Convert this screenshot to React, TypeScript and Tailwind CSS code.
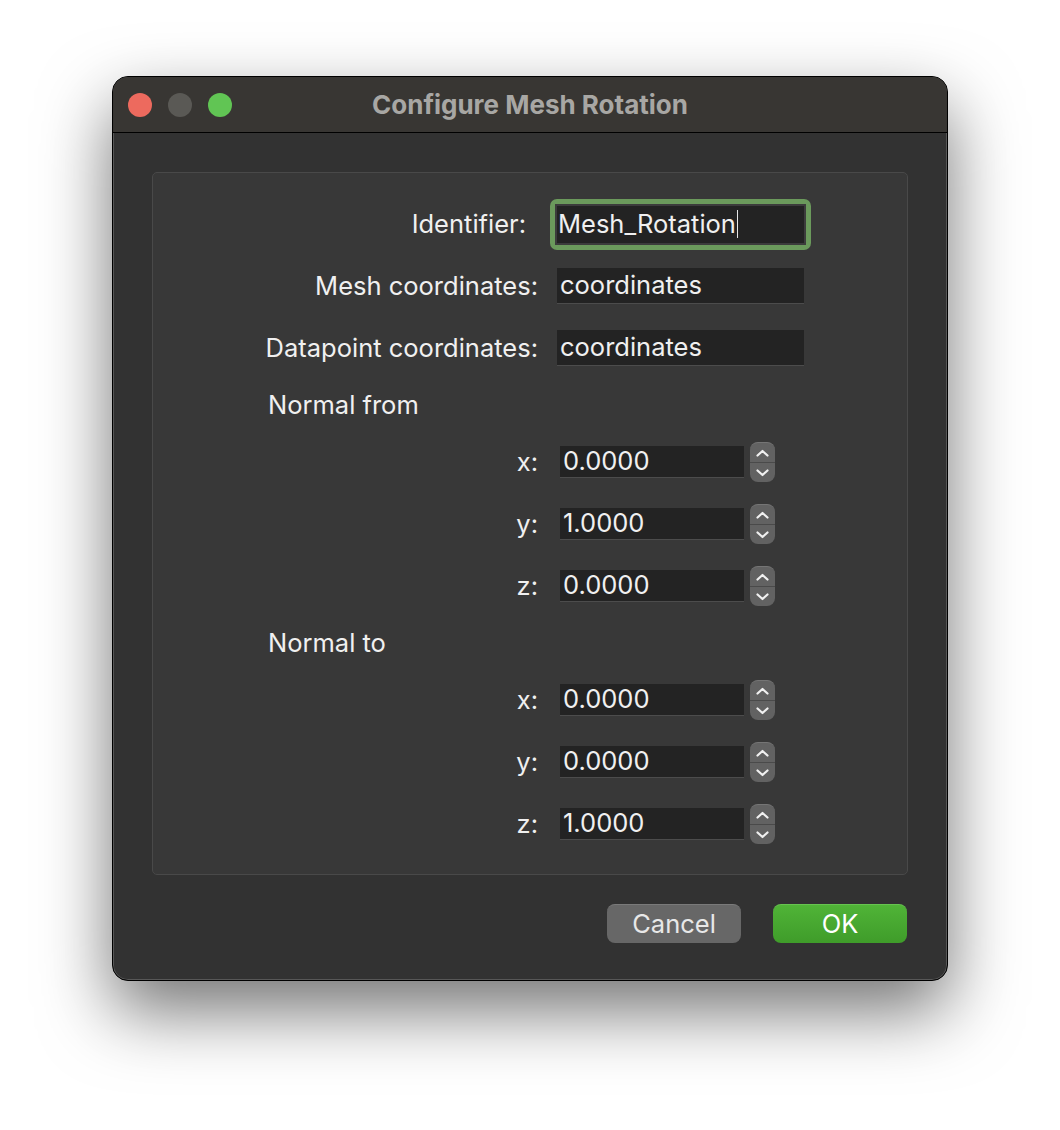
import React from 'react'

const font = { fontFamily: 'Inter, "Noto Sans", sans-serif' }

function TrafficLights() {
  return (
    <div className="flex items-center gap-[16px] pl-[15px]">
      <span className="w-[24px] h-[24px] rounded-full bg-[#ed6a5e]" />
      <span className="w-[24px] h-[24px] rounded-full bg-[#5a5955]" />
      <span className="w-[24px] h-[24px] rounded-full bg-[#61c554]" />
    </div>
  )
}

function Spinner() {
  return (
    <div className="w-[25px] h-[40px] rounded-[8px] bg-[#626262] border-t border-[#757575] flex flex-col overflow-hidden">
      <div className="flex-1 flex items-center justify-center">
        <svg width="13" height="8" viewBox="0 0 13 8">
          <polyline points="1.5,6.5 6.5,2 11.5,6.5" fill="none" stroke="#f0f0f0" strokeWidth="2.2" strokeLinecap="round" strokeLinejoin="round" />
        </svg>
      </div>
      <div className="h-px bg-[#4a4a4a]" />
      <div className="flex-1 flex items-center justify-center">
        <svg width="13" height="8" viewBox="0 0 13 8">
          <polyline points="1.5,1.5 6.5,6 11.5,1.5" fill="none" stroke="#f0f0f0" strokeWidth="2.2" strokeLinecap="round" strokeLinejoin="round" />
        </svg>
      </div>
    </div>
  )
}

function TextRow({ label, value, focused, labelPad }: { label: string; value: string; focused?: boolean; labelPad?: string }) {
  return (
    <div className="h-[62px] flex items-center">
      <div className={`w-[385px] text-right ${labelPad ?? ''}`}>{label}</div>
      {focused ? (
        <div className="ml-[12px] p-[5px] rounded-[7px] bg-[#6b9a5c]">
          <div className="w-[251px] h-[41px] bg-[#232323] border-2 border-[#3c3c3c] flex items-center pl-[1px]">
            <span>{value}</span>
            <span className="w-[1.5px] h-[28px] bg-[#e6e6e6] ml-[1px]" />
          </div>
        </div>
      ) : (
        <div className="ml-[19px] w-[247px] h-[36px] bg-[#232323] border-b border-[#4c4c4c] flex items-center pl-[3px]">
          {value}
        </div>
      )}
    </div>
  )
}

function SpinRow({ axis, value }: { axis: string; value: string }) {
  return (
    <div className="h-[62px] flex items-center">
      <div className="w-[385px] text-right">{axis}:</div>
      <div className="ml-[22px] w-[184px] h-[32px] bg-[#232323] border-b border-[#4c4c4c] flex items-center pl-[3px]">
        {value}
      </div>
      <div className="ml-[6px]">
        <Spinner />
      </div>
    </div>
  )
}

function Section({ title }: { title: string }) {
  return <div className="h-[52px] flex items-center pl-[115px]">{title}</div>
}

export default function App() {
  return (
    <div className="min-h-[1130px] bg-white pt-[76px] pl-[112px]" style={font}>
      <div className="w-[836px] h-[905px] rounded-[16px] border border-black bg-[#323232] overflow-hidden shadow-[0_30px_70px_rgba(0,0,0,0.55),inset_0_0_0_1px_rgba(255,255,255,0.18)] flex flex-col">
        {/* title bar */}
        <div className="h-[56px] shrink-0 bg-[#383633] border-b border-black grid grid-cols-[1fr_auto_1fr] items-center">
          <TrafficLights />
          <div className="text-[26px] font-bold text-[#a8a7a4]">Configure Mesh Rotation</div>
          <div />
        </div>

        {/* body */}
        <div className="flex-1 flex flex-col px-[39px] pt-[39px] text-[25.5px] text-[#f0f0f0]">
          <div className="h-[703px] rounded-[5px] bg-[#383838] border border-[#494949] pt-[20px]">
            <TextRow label="Identifier:" value="Mesh_Rotation" focused labelPad="pr-[12px]" />
            <TextRow label="Mesh coordinates:" value="coordinates" />
            <TextRow label="Datapoint coordinates:" value="coordinates" />
            <Section title="Normal from" />
            <SpinRow axis="x" value="0.0000" />
            <SpinRow axis="y" value="1.0000" />
            <SpinRow axis="z" value="0.0000" />
            <Section title="Normal to" />
            <SpinRow axis="x" value="0.0000" />
            <SpinRow axis="y" value="0.0000" />
            <SpinRow axis="z" value="1.0000" />
          </div>

          <div className="flex justify-end gap-[32px] mt-[29px] pr-[1px]">
            <button className="w-[134px] h-[39px] rounded-[8px] bg-[#676767] border-t border-[#7a7a7a] text-[#e8e8e8]">
              Cancel
            </button>
            <button className="w-[134px] h-[39px] rounded-[8px] bg-gradient-to-b from-[#50b437] to-[#3f9c2a] border-t border-[#67c450] text-white">
              OK
            </button>
          </div>
        </div>
      </div>
    </div>
  )
}
